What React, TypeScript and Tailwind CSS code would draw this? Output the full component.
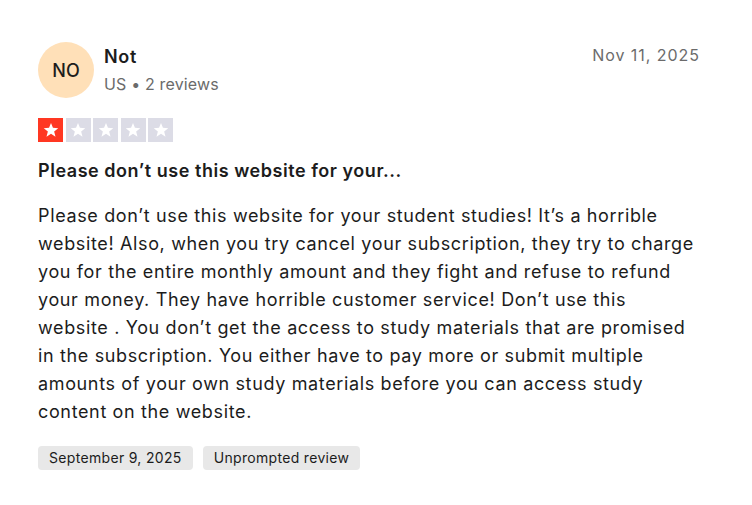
const Star = ({ filled }: { filled: boolean }) => (
  <div className={`flex h-6 w-[25px] items-center justify-center ${filled ? 'bg-[#ff3722]' : 'bg-[#dcdce6]'}`}>
    <svg viewBox="0 0 24 24" className="h-[18px] w-[18px]" fill="#ffffff">
      <path d="M12 2.5l2.6 6.6 7.1.4-5.5 4.5 1.8 6.9L12 17l-6 3.9 1.8-6.9-5.5-4.5 7.1-.4z" />
    </svg>
  </div>
)

export default function App() {
  const text =
    'Please don’t use this website for your student studies! It’s a horrible website! Also, when you try cancel your subscription, they try to charge you for the entire monthly amount and they fight and refuse to refund your money. They have horrible customer service! Don’t use this website . You don’t get the access to study materials that are promised in the subscription. You either have to pay more or submit multiple amounts of your own study materials before you can access study content on the website.'

  return (
    <div className="min-h-[505px] w-[752px] bg-white pl-[38px] pr-[52px] pt-[42px] font-['Inter',sans-serif] tracking-[0.04em] text-[#1c1c1c]">
      {/* Header */}
      <div className="flex items-start justify-between">
        <div className="flex items-center gap-[10px]">
          <div className="flex h-[56px] w-[56px] items-center justify-center rounded-full bg-[#ffe0b8] text-[18px] font-medium tracking-normal text-[#1c1c1c]">
            NO
          </div>
          <div className="flex flex-col">
            <span className="text-[18px] font-semibold leading-[26px]">Not</span>
            <span className="mt-[2px] text-[16px] leading-[24px] tracking-[0.01em] text-[#6b6b6b]">US • 2 reviews</span>
          </div>
        </div>
        <span className="mt-[1px] text-[16px] leading-[24px] tracking-[0.06em] text-[#6b6b6b]">Nov 11, 2025</span>
      </div>

      {/* Stars */}
      <div className="mt-[20px] flex gap-[2.5px]">
        <Star filled />
        <Star filled={false} />
        <Star filled={false} />
        <Star filled={false} />
        <Star filled={false} />
      </div>

      {/* Title */}
      <h2 className="mt-[16px] text-[18px] font-semibold leading-[26px] tracking-[0.03em]">Please don’t use this website for your...</h2>

      {/* Body */}
      <p className="mt-[18px] w-[662px] text-[18px] leading-[28px]">{text}</p>

      {/* Tags */}
      <div className="mt-[20px] flex gap-[10px] tracking-[0.02em]">
        <span className="rounded-[4px] bg-[#e8e8e8] px-[11px] py-[2px] text-[14px] leading-[20px]">September 9, 2025</span>
        <span className="rounded-[4px] bg-[#e8e8e8] px-[11px] py-[2px] text-[14px] leading-[20px]">Unprompted review</span>
      </div>
    </div>
  )
}
